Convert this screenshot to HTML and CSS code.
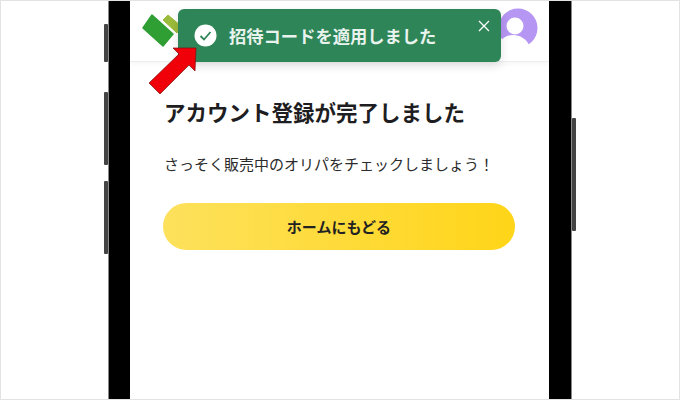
FILE: index.html
```html
<!DOCTYPE html>
<html lang="ja">
<head>
    <meta charset="UTF-8">
    <meta name="viewport" content="width=device-width, initial-scale=1.0">
    <title>アカウント登録が完了しました</title>
    <link rel="stylesheet" href="styles.css">
</head>
<body>
    <div class="stage">
        <div class="phone">
            <!-- side buttons -->
            <span class="side-btn side-btn-1"></span>
            <span class="side-btn side-btn-2"></span>
            <span class="side-btn side-btn-3"></span>
            <span class="side-btn side-btn-power"></span>

            <div class="screen">
                <header class="app-header">
                    <svg class="logo" width="40" height="36" viewBox="0 0 40 36">
                        <polygon points="21,6 26,1 39,12 35,19" fill="#9bbb3a" stroke="#9bbb3a" stroke-linejoin="round"/>
                        <polygon points="1,14 10,1 31,20 21,32" fill="#2f9e33" stroke="#2f9e33" stroke-width="1.5" stroke-linejoin="round"/>
                    </svg>
                    <svg class="avatar" width="40" height="40" viewBox="0 0 40 40">
                        <circle cx="20" cy="20" r="19.5" fill="#b596f2"/>
                        <circle cx="17" cy="18" r="8.5" fill="#fff"/>
                        <path d="M2 34 C8 24 26 24 32 39 L32 42 L2 42 Z" fill="#fff"/>
                    </svg>
                </header>

                <main class="content">
                    <h1 class="title">アカウント登録が完了しました</h1>
                    <p class="lead">さっそく販売中のオリパをチェックしましょう！</p>
                    <button class="home-btn" type="button">ホームにもどる</button>
                </main>

                <!-- toast -->
                <div class="toast">
                    <svg class="toast-check" width="23" height="23" viewBox="0 0 23 23">
                        <circle cx="11.5" cy="11.5" r="11" fill="#fff"/>
                        <path d="M6.5 12 L10 15.5 L16.5 8" fill="none" stroke="#2e8558" stroke-width="1.8"/>
                    </svg>
                    <span class="toast-text">招待コードを適用しました</span>
                    <svg class="toast-close" width="12" height="12" viewBox="0 0 12 12">
                        <path d="M1 1 L11 11 M11 1 L1 11" stroke="#fff" stroke-width="1.3"/>
                    </svg>
                </div>
            </div>
        </div>

        <svg class="arrow" width="52" height="50" viewBox="0 0 52 50">
            <polygon points="25,1 48,1 47,24 41,18 12,47 1,36 31,7" fill="#f00008" stroke="#7a1010" stroke-width="0.7"/>
        </svg>
    </div>
</body>
</html>
```

FILE: styles.css
```css
* {
    box-sizing: border-box;
}
html, body {
    margin: 0;
    padding: 0;
}
body {
    font-family: "Noto Sans CJK JP", "Noto Sans", sans-serif;
    background-color: #fff;
}
.stage {
    position: relative;
    width: 680px;
    height: 400px;
    padding-left: 107px;
    border: 1px solid #e3e3e3;
    overflow: hidden;
}
.phone {
    position: relative;
    width: 464px;
    height: 100%;
    background: #000;
    border-left: 1px solid #8a8a8a;
    border-right: 1px solid #8a8a8a;
    padding: 0 22px 0 21px;
}
.side-btn {
    position: absolute;
    width: 4px;
    background: #444;
    border-radius: 1px;
}
.side-btn-1 {
    left: -5px;
    top: 23px;
    height: 38px;
}
.side-btn-2 {
    left: -5px;
    top: 91px;
    height: 73px;
}
.side-btn-3 {
    left: -5px;
    top: 180px;
    height: 73px;
}
.side-btn-power {
    right: -5px;
    top: 117px;
    height: 113px;
}
.screen {
    position: relative;
    height: 100%;
    background: #fff;
}
.app-header {
    height: 61px;
    padding: 7px 11px 0 12px;
    display: flex;
    justify-content: space-between;
    align-items: flex-start;
    border-bottom: 1px solid #eee;
    box-shadow: 0 2px 5px rgba(0, 0, 0, 0.04);
}
.logo {
    margin-top: 6px;
}
.content {
    padding: 0 34px 0 33px;
}
.title {
    margin: 34px 0 0 1px;
    font-size: 21.5px;
    line-height: 32px;
    font-weight: 700;
    color: #1d1d22;
    white-space: nowrap;
}
.lead {
    margin: 25px 0 0 1px;
    font-size: 15px;
    line-height: 22px;
    color: #2b2b2b;
    white-space: nowrap;
}
.home-btn {
    display: block;
    width: 352px;
    height: 47px;
    margin-top: 28px;
    border: none;
    border-radius: 24px;
    background: linear-gradient(90deg, #fde15c, #ffd518);
    font-family: inherit;
    font-size: 15px;
    font-weight: 700;
    color: #222;
}
.toast {
    position: absolute;
    left: 48px;
    top: 8px;
    width: 323px;
    height: 53px;
    padding: 0 12px 0 16px;
    display: flex;
    align-items: center;
    background: #2e8558;
    border-radius: 6px;
    box-shadow: 0 4px 10px rgba(0, 0, 0, 0.12);
}
.toast-check {
    flex: none;
}
.toast-text {
    margin-left: 12px;
    font-size: 17.3px;
    font-weight: 700;
    color: #e9f3ee;
    white-space: nowrap;
}
.toast-close {
    position: absolute;
    right: 11px;
    top: 11px;
}
.arrow {
    position: absolute;
    left: 147px;
    top: 46px;
}
```
